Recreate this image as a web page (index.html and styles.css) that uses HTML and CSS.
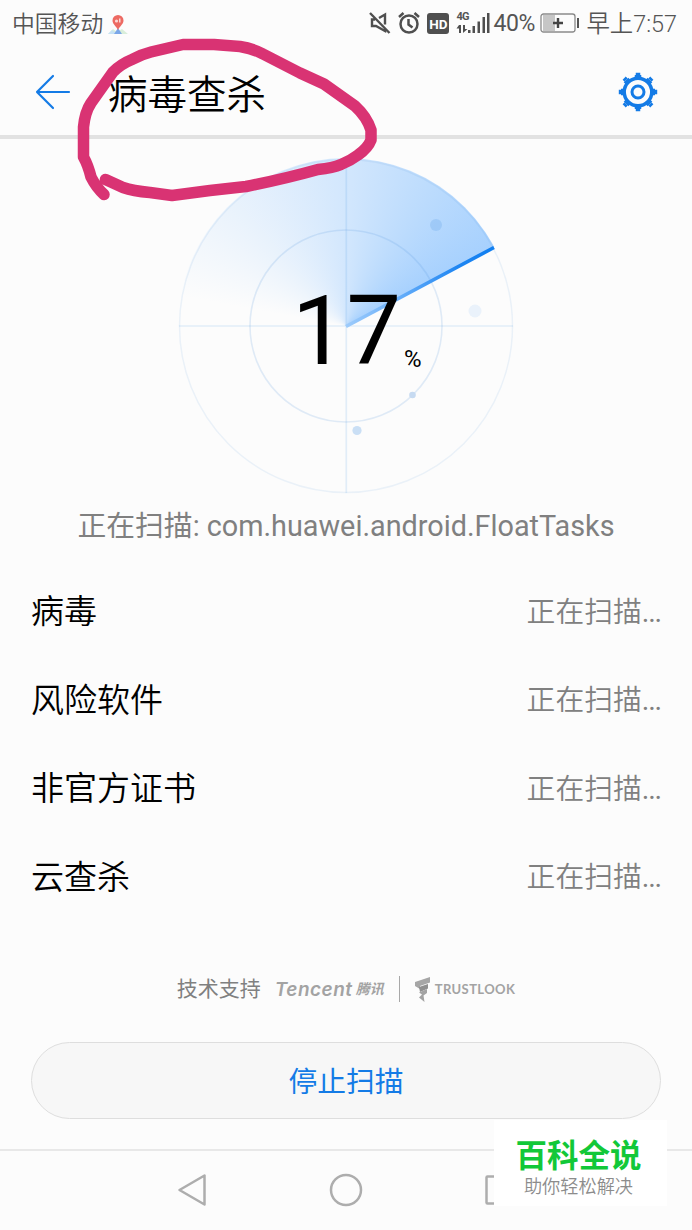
FILE: index.html
```html
<!DOCTYPE html>
<html lang="zh-CN">
<head>
    <meta charset="UTF-8">
    <meta name="viewport" content="width=device-width, initial-scale=1.0">
    <title>病毒查杀</title>
    <link rel="stylesheet" href="styles.css">
</head>
<body>
    <div class="screen">
        <div class="status-bar">
            <span class="carrier">中国移动</span>
            <svg class="pin" width="22" height="22" viewBox="0 0 22 22">
                <path d="M1 20l5-5 4 3 5-3 6 5z" fill="#d9eeda"/>
                <path d="M1 20l4-4 5 4z" fill="#c6e2f5"/>
                <path d="M7 20l4-6 4 6z" fill="#7ba7e8"/>
                <path d="M11 16C9 12 5.500 10 5.500 6.500a5.500 5.500 0 0 1 11 0C16.500 10 13 12 11 16z" fill="#ed6a63"/>
                <circle cx="9.500" cy="7" r="1.600" fill="#fbd9d5"/>
                <path d="M12 4.500h1.500v4H12z" fill="#fbd9d5"/>
            </svg>
            <div class="indicators">
                <svg class="mute" width="22" height="22" viewBox="0 0 22 22" fill="none" stroke="#4f4f4f" stroke-width="2.400">
                    <path d="M1 1l19.500 20M10 6l6-3.500v10M6 7.500H3v6.500h4l9 5v-3"/>
                </svg>
                <svg class="alarm" width="22" height="22" viewBox="0 0 22 22" fill="none" stroke="#4f4f4f" stroke-width="2.500">
                    <circle cx="11" cy="12" r="8.500"/>
                    <path d="M10.500 7v5.500l4 3M1 5l4.500-4M21 5l-4.500-4"/>
                </svg>
                <span class="hd">HD</span>
                <div class="network">
                    <span class="net">4G</span>
                    <svg class="signal" width="34" height="22" viewBox="0 0 34 22" fill="#4f4f4f">
                        <path d="M3 13h2v8H3v-4.500H0.500zM7 13h2v4h2.500L7 21zM12 18h2.500v3H12zM16.500 14H19v7h-2.500zM21.500 9.500H24V21h-2.500zM26.500 5H29v16h-2.500zM31 1h2.500v20H31z"/>
                    </svg>
                </div>
                <span class="percent">40%</span>
                <svg class="battery" width="40" height="20" viewBox="0 0 40 20">
                    <path d="M3 2h12v16H3z" fill="#c6c6c6"/>
                    <rect x="1" y="1" width="34" height="18" rx="2.500" fill="none" stroke="#8a8a8a" stroke-width="1.300"/>
                    <path d="M13 10h10M18 5v10" stroke="#444" stroke-width="2.400"/>
                    <path d="M37 5h2v10h-2z" fill="#555"/>
                </svg>
                <span class="time">早上7:57</span>
            </div>
        </div>

        <header class="header">
            <svg class="back" width="36" height="36" viewBox="0 0 36 36" fill="none" stroke="#147be6" stroke-width="2.200" stroke-linecap="round" stroke-linejoin="round">
                <path d="M34 18H2M18 2L2 18l16 16"/>
            </svg>
            <h1>病毒查杀</h1>
            <svg class="gear" width="40" height="40" viewBox="-20 -20 40 40" fill="none" stroke="#147be6">
                <circle r="13.800" stroke-width="3.500"/>
                <circle r="6" stroke-width="3"/>
                <g stroke-width="6.500">
                    <path d="M0-14v-3M0 14v3M14 0h3M-14 0h-3M10-10l2-2M-10-10l-2-2M10 10l2 2M-10 10l-2 2"/>
                    <path d="M0-17v-2.200M0 17v2.200M17 0h2.200M-17 0h-2.200M12-12l1.800-1.800M-12-12l-1.800-1.800M12 12l1.800 1.800M-12 12l-1.800 1.800" stroke-width="4.500"/>
                </g>
            </svg>
        </header>

        <main>
            <div class="radar">
                <svg class="radar-grid" width="336" height="336" viewBox="-168 -168 336 336" fill="none">
                    <defs>
                        <linearGradient id="beam" gradientUnits="userSpaceOnUse" x1="0" y1="0" x2="148" y2="-79">
                            <stop offset="0" stop-color="#9dcbfb"/>
                            <stop offset="0.350" stop-color="#68affa"/>
                            <stop offset="0.750" stop-color="#1f86f2"/>
                            <stop offset="1" stop-color="#0f7ef0"/>
                        </linearGradient>
                    </defs>
                    <circle r="166.500" stroke="#4a90d9" stroke-opacity="0.100" stroke-width="1.500"/>
                    <circle r="96" stroke="#4a90d9" stroke-opacity="0.160" stroke-width="1.600"/>
                    <path d="M-167 0H167M0.300-167V167" stroke="#4a9ae6" stroke-opacity="0.150" stroke-width="1.700"/>
                    <circle cx="90" cy="-101" r="6" fill="#8fc0f3" fill-opacity="0.600"/>
                    <circle cx="129" cy="-15" r="6.500" fill="#eaf2fb"/>
                    <circle cx="66.500" cy="69" r="3.300" fill="#c6daf1"/>
                    <circle cx="11" cy="104.500" r="4.600" fill="#cadff5"/>
                    <path d="M0 0.500L148-78.500" stroke="url(#beam)" stroke-width="3.600"/>
                </svg>
                <div class="progress">17<span class="unit">%</span></div>
            </div>

            <p class="scanning">正在扫描: com.huawei.android.FloatTasks</p>

            <ul class="checks">
                <li><span class="name">病毒</span><span class="state">正在扫描<span class="dots">...</span></span></li>
                <li><span class="name">风险软件</span><span class="state">正在扫描<span class="dots">...</span></span></li>
                <li><span class="name">非官方证书</span><span class="state">正在扫描<span class="dots">...</span></span></li>
                <li><span class="name">云查杀</span><span class="state">正在扫描<span class="dots">...</span></span></li>
            </ul>

            <div class="support">
                <span class="support-label">技术支持</span>
                <span class="tencent">Tencent</span>
                <span class="tencent-cn">腾讯</span>
                <span class="divider"></span>
                <svg class="trust-icon" width="16" height="25" viewBox="0 0 16 25">
                    <path d="M0 5L15 0v5.500L5 9v3L0 9z" fill="#a6a6a6"/>
                    <path d="M4 10l9-3v4.500l-8 3.500z" fill="#8f8f8f"/>
                    <path d="M4 15.500l8-3.500v4L8.500 18.500 9.500 25 4 20.500l3-3z" fill="#a3a3a3"/>
                </svg>
                <span class="trustlook">TRUSTLOOK</span>
            </div>

            <button class="stop">停止扫描</button>
        </main>

        <nav class="nav-bar">
            <svg width="30" height="34" viewBox="0 0 30 34"><path d="M27.500 2.500v29L2.500 17z"/></svg>
            <svg width="34" height="34" viewBox="0 0 34 34"><circle cx="17" cy="17" r="15"/></svg>
            <svg width="30" height="34" viewBox="0 0 30 34"><rect x="1.500" y="3.500" width="27" height="27" rx="1"/></svg>
        </nav>

        <!-- hand drawn highlight around the title -->
        <svg class="marker" width="310" height="170" viewBox="70 35 310 170">
            <path d="M104 194.500C98 189 94 183 91 177Q88 165 83.500 157V127Q85 112 91 103L113 72Q121 64 132 59.500Q141 54.500 151 52L183 44.500H214L240 46.500Q253 48.500 263 54L300 73L324 84L355 106Q367 117 371 130V140Q368 148 358 155Q350 161 341 164.500Q333 168 318 169.500Q284 179 246 186.500L210 190.500L172 195.500L150 192.500Q133 191 123 187.500L105.500 179.500"/>
        </svg>

        <div class="watermark">
            <strong>百科全说</strong>
            <span>助你轻松解决</span>
        </div>
    </div>
</body>
</html>
```
FILE: styles.css
```css
* {
    box-sizing: border-box;
}
body {
    margin: 0;
    background-color: #fcfcfc;
    font-family: Roboto, "Noto Sans CJK SC", sans-serif;
    color: #000;
}
.screen {
    position: relative;
    display: flex;
    flex-direction: column;
    width: 692px;
    height: 1230px;
    overflow: hidden;
}
svg {
    display: block;
    flex-shrink: 0;
}

/* status bar */
.status-bar {
    display: flex;
    align-items: center;
    height: 48px;
    padding: 0 15px 2px 12px;
    color: #555;
    font-size: 22.8px;
    font-weight: 350;
    line-height: 1;
    white-space: nowrap;
}
.carrier {
    padding-top: 4px;
}
.pin {
    margin: 3px 0 0 4px;
}
.indicators {
    display: flex;
    align-items: center;
    margin-left: auto;
}
.alarm {
    margin-left: 7px;
}
.hd {
    width: 22px;
    height: 21px;
    margin-left: 7px;
    border-radius: 3px;
    background-color: #4f4f4f;
    color: #fff;
    font-size: 13.5px;
    font-weight: 700;
    line-height: 22px;
    text-align: center;
}
.network {
    display: grid;
    margin-left: 7px;
}
.net,
.signal {
    grid-area: 1 / 1;
}
.net {
    margin-top: -1px;
    font-family: Roboto, sans-serif;
    font-size: 11px;
    font-weight: 700;
    line-height: 12px;
    letter-spacing: -0.7px;
}
.percent {
    width: 43px;
    margin-left: 3px;
    font-size: 23px;
    font-weight: 400;
    letter-spacing: -0.4px;
}
.battery {
    margin-left: 4px;
}
.time {
    margin-left: 6px;
    padding-top: 3px;
    font-size: 23.4px;
}

/* title bar */
.header {
    display: flex;
    align-items: center;
    height: 91px;
    padding: 0 34px 0 35px;
    border-bottom: 4px solid #e2e2e2;
}
h1 {
    margin: 0 auto 0 37px;
    padding-top: 8px;
    font-size: 39.5px;
    font-weight: 350;
    line-height: 50px;
}

/* radar */
main {
    display: flex;
    flex-direction: column;
    align-items: center;
    padding: 19px 31px 0;
}
.radar {
    display: grid;
    width: 336px;
    height: 336px;
    border-radius: 50%;
    background: conic-gradient(from 280deg, rgba(130, 190, 255, 0), rgba(130, 190, 255, 0.34) 80deg, rgba(110, 180, 255, 0.6) 141.900deg, transparent 142deg);
}
.radar-grid,
.progress {
    grid-area: 1 / 1;
}
.progress {
    display: flex;
    align-items: baseline;
    padding: 115px 0 0 114px;
    font-size: 97px;
    line-height: 116px;
}
.unit {
    align-self: flex-start;
    margin: 28px 0 0 3px;
    font-size: 24px;
}
.scanning {
    margin: 10px 0 17px;
    color: #808080;
    font-size: 28.8px;
    line-height: 44px;
    white-space: nowrap;
}

/* check list */
.checks {
    align-self: stretch;
    margin: 0;
    padding: 0;
    list-style: none;
}
.checks li {
    display: flex;
    align-items: center;
    justify-content: space-between;
    height: 88.500px;
}
.name {
    font-size: 33px;
    font-weight: 350;
}
.state {
    color: #808080;
    font-size: 28.8px;
    font-weight: 350;
}
.dots {
    font-weight: 400;
    letter-spacing: -1.200px;
}

/* partners */
.support {
    display: flex;
    align-items: center;
    height: 40px;
    margin-top: 50px;
    color: #a3a3a3;
    line-height: 1;
    white-space: nowrap;
}
.support-label {
    width: 84px;
    color: #808080;
    font-size: 21px;
}
.tencent {
    width: 79px;
    margin-left: 14px;
    font-family: Inter, sans-serif;
    font-size: 19px;
    font-style: italic;
    font-weight: 600;
    letter-spacing: 0.5px;
}
.tencent-cn {
    margin-left: 2px;
    font-size: 14px;
    font-style: italic;
    font-weight: 700;
}
.divider {
    width: 1px;
    height: 26px;
    margin: 0 15px;
    background-color: #a8a8a8;
}
.trustlook {
    margin-left: 4px;
    font-family: Lato, sans-serif;
    font-size: 13px;
    font-weight: 700;
    letter-spacing: 0.4px;
}
.stop {
    width: 630px;
    height: 77px;
    margin-top: 33px;
    padding-bottom: 3px;
    border: 1px solid #dedede;
    border-radius: 39px;
    background-color: #f7f7f7;
    color: #147be6;
    font-family: inherit;
    font-size: 28.8px;
}

/* system navigation */
.nav-bar {
    display: flex;
    align-items: center;
    justify-content: space-between;
    height: 81px;
    margin-top: auto;
    padding: 0 177px 2px;
    border-top: 2px solid #e8e8e8;
}
.nav-bar svg {
    fill: none;
    stroke: #adadad;
    stroke-width: 2.5;
    stroke-linejoin: round;
}

/* overlays */
.marker {
    position: absolute;
    top: 35px;
    left: 70px;
    fill: none;
    stroke: #d93373;
    stroke-width: 11.5;
    stroke-linecap: round;
    stroke-linejoin: round;
}
.watermark {
    position: absolute;
    top: 1120px;
    left: 494px;
    display: flex;
    flex-direction: column;
    align-items: center;
    width: 173px;
    height: 86px;
    padding: 18px 4px 0 0;
    background-color: #fff;
    white-space: nowrap;
}
.watermark strong {
    color: #12c838;
    font-size: 31.5px;
    font-weight: 700;
    line-height: 37px;
}
.watermark span {
    color: #8c8c8c;
    font-size: 18.2px;
    font-weight: 350;
    line-height: 24px;
}
```
